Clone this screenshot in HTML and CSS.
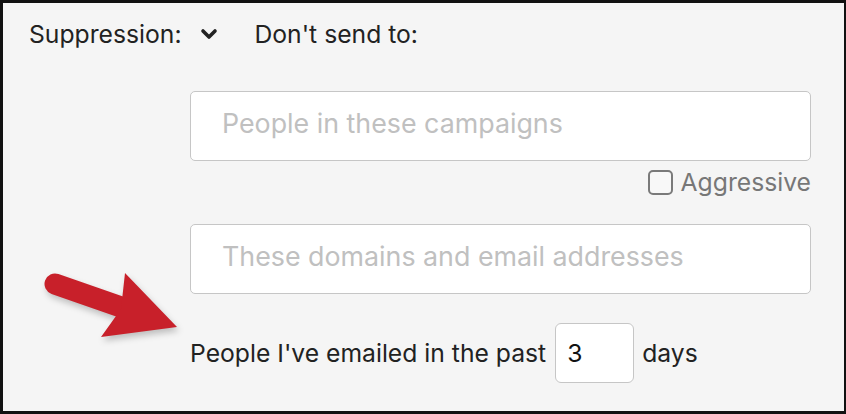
FILE: index.html
```html
<!DOCTYPE html>
<html lang="en">
<head>
    <meta charset="UTF-8">
    <meta name="viewport" content="width=device-width, initial-scale=1.0">
    <title>Suppression</title>
    <link rel="stylesheet" href="styles.css">
</head>
<body>
    <div class="frame">
        <div class="suppression-header">
            <span>Suppression:</span>
            <svg class="chevron" viewBox="0 0 18 12">
                <path d="M3 3l6 6l6-6"></path>
            </svg>
            <span>Don't send to:</span>
        </div>

        <div class="suppression-fields">
            <input class="text-field" type="text" placeholder="People in these campaigns">
            <label class="aggressive">
                <input type="checkbox">
                <span>Aggressive</span>
            </label>
            <input class="text-field second" type="text" placeholder="These domains and email addresses">
            <div class="past-row">
                <span>People I've emailed in the past</span>
                <input class="days-field" type="text" value="3">
                <span>days</span>
            </div>
        </div>

        <!-- callout arrow -->
        <svg class="callout-arrow" viewBox="40 260 150 90">
            <line x1="55" y1="284" x2="121" y2="307"></line>
            <polygon points="125,273 177,327 101,337 121,309"></polygon>
        </svg>
    </div>
</body>
</html>
```

FILE: styles.css
```css
* {
    margin: 0;
    padding: 0;
    box-sizing: border-box;
}

body {
    font-family: Inter, Roboto, 'Liberation Sans', sans-serif;
    background: #fff;
}

.frame {
    position: relative;
    width: 846px;
    height: 414px;
    border: 3px solid #111;
    border-right-width: 2px;
    background: #f5f5f5;
    color: #222;
    font-size: 24.7px;
    line-height: 30px;
}

.suppression-header {
    display: flex;
    align-items: center;
    padding: 16px 0 0 26px;
}

.chevron {
    width: 18px;
    height: 12px;
    margin: 0 37px 0 18px;
    stroke: #222;
    stroke-width: 3.6;
    fill: none;
    stroke-linecap: round;
    stroke-linejoin: round;
}

.suppression-fields {
    width: 621px;
    margin: 42px 0 0 187px;
    display: flex;
    flex-direction: column;
}

.text-field {
    height: 70px;
    border: 1px solid #c6c6c6;
    border-radius: 5px;
    background: #fff;
    padding: 0 0 6px 31px;
    font-family: inherit;
    font-size: 26.8px;
    color: #222;
    outline: none;
}

.text-field::placeholder {
    color: #c0c0c0;
}

.text-field.second {
    margin-top: 27px;
}

.aggressive {
    display: flex;
    align-items: center;
    justify-content: flex-end;
    margin-top: 6px;
    color: #777;
}

.aggressive input {
    appearance: none;
    width: 25px;
    height: 25px;
    border: 2px solid #7a7a7a;
    border-radius: 5px;
    background: #f8f8f8;
    margin-right: 8px;
}

.past-row {
    display: flex;
    align-items: center;
    margin-top: 29px;
}

.days-field {
    width: 79px;
    height: 60px;
    margin: 0 8px 0 9px;
    padding-left: 11px;
    border: 1px solid #c6c6c6;
    border-radius: 6px;
    background: #fff;
    font-family: inherit;
    font-size: 24.7px;
    color: #111;
    outline: none;
}

.callout-arrow {
    position: absolute;
    left: 37px;
    top: 257px;
    width: 150px;
    height: 90px;
    overflow: visible;
    filter: drop-shadow(2px 4px 3px rgba(0, 0, 0, 0.22));
}

.callout-arrow line {
    stroke: #c8202a;
    stroke-width: 21;
    stroke-linecap: round;
}

.callout-arrow polygon {
    fill: #c8202a;
}
```
